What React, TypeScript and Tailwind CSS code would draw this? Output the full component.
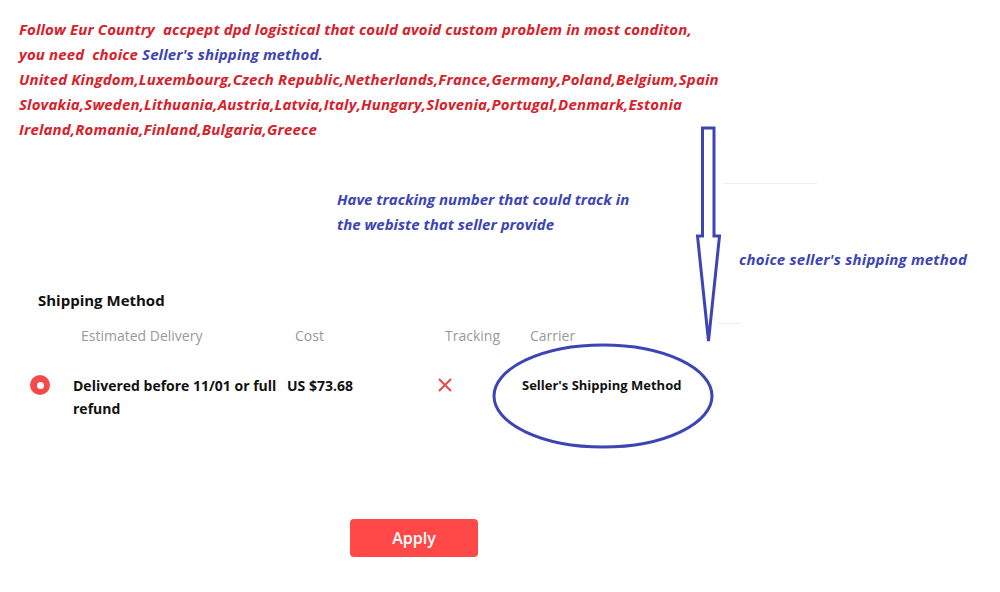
import React from "react";

const redLine = "text-[#d7212b] font-bold italic text-[15px] leading-[25px] whitespace-nowrap";

function Annotations() {
  return (
    <svg
      className="absolute inset-0 pointer-events-none"
      width={1000}
      height={592}
      viewBox="0 0 1000 592"
    >
      {/* faint divider fragments */}
      <line x1={723} y1={183.5} x2={817} y2={183.5} stroke="#efefef" strokeWidth={1} />
      <line x1={718} y1={323.5} x2={741} y2={323.5} stroke="#efefef" strokeWidth={1} />
      {/* downward outline arrow */}
      <path
        d="M702.5 128 H714 V236 H719.5 L708.5 341 L697.5 236 H702.5 Z"
        fill="none"
        stroke="#3c44b6"
        strokeWidth={3}
        strokeLinejoin="miter"
      />
      {/* hand-drawn circle around the carrier */}
      <ellipse cx={603} cy={396} rx={109} ry={51} fill="none" stroke="#3c44b6" strokeWidth={3} />
    </svg>
  );
}

export default function App() {
  return (
    <div
      className="relative w-[1000px] h-[592px] bg-white overflow-hidden"
      style={{ fontFamily: '"Open Sans", "Noto Sans", sans-serif' }}
    >
      <div className="pl-[19px] pt-[17px]">
        <div className={redLine + " tracking-[0.12px]"}>Follow Eur Country&nbsp; accpept dpd logistical that could avoid custom problem in most conditon,</div>
        <div className={redLine + " tracking-[0.12px]"}>
          you need&nbsp; choice <span className="text-[#3c44b6]">Seller's shipping method.</span>
        </div>
        <div className={redLine + " tracking-[0.15px]"}>United Kingdom,Luxembourg,Czech Republic,Netherlands,France,Germany,Poland,Belgium,Spain</div>
        <div className={redLine + " tracking-[0.15px]"}>Slovakia,Sweden,Lithuania,Austria,Latvia,Italy,Hungary,Slovenia,Portugal,Denmark,Estonia</div>
        <div className={redLine + " tracking-[0.15px]"}>Ireland,Romania,Finland,Bulgaria,Greece</div>
      </div>

      <div className="flex">
        <div className="ml-[337px] mt-[45px] text-[#3c44b6] font-bold italic text-[15px] leading-[25px]">
          <div>Have tracking number that could track in</div>
          <div>the webiste that seller provide</div>
        </div>
        <div className="ml-auto mr-[33px] mt-[107px] text-[#3c44b6] font-bold italic text-[15px] leading-[20px] tracking-[0.2px]">
          choice seller's shipping method
        </div>
      </div>

      <div className="pl-[38px] mt-[21px] text-[15px] font-bold text-[#111] leading-[20px]">Shipping Method</div>

      <div className="flex mt-[16px] text-[14px] text-[#999] leading-[20px]">
        <div className="ml-[81px] w-[214px]">Estimated Delivery</div>
        <div className="w-[150px]">Cost</div>
        <div className="w-[85px]">Tracking</div>
        <div>Carrier</div>
      </div>

      <div className="flex items-start mt-[28px] text-[14px] font-bold text-[#111] leading-[23px]">
        <div className="ml-[30px] mt-[1px] w-[20px] h-[20px] rounded-full bg-[#f44a4a] flex items-center justify-center">
          <div className="w-[7px] h-[7px] rounded-full bg-white" />
        </div>
        <div className="ml-[23px] w-[214px]">
          Delivered before 11/01 or full
          <br />
          refund
        </div>
        <div className="w-[150px]">US $73.68</div>
        <div className="w-[85px] pt-[3px]">
          <svg width="16" height="16" viewBox="0 0 16 16">
            <path d="M2 2 L14 14 M14 2 L2 14" stroke="#e8474b" strokeWidth="2" />
          </svg>
        </div>
        <div className="text-[13px] leading-[23px]">Seller's Shipping Method</div>
      </div>

      <div className="flex mt-[99px]">
        <button className="ml-[350px] w-[128px] h-[38px] rounded-[4px] bg-[#ff4848] text-white text-[16px] font-semibold">
          Apply
        </button>
      </div>

      <Annotations />
    </div>
  );
}
